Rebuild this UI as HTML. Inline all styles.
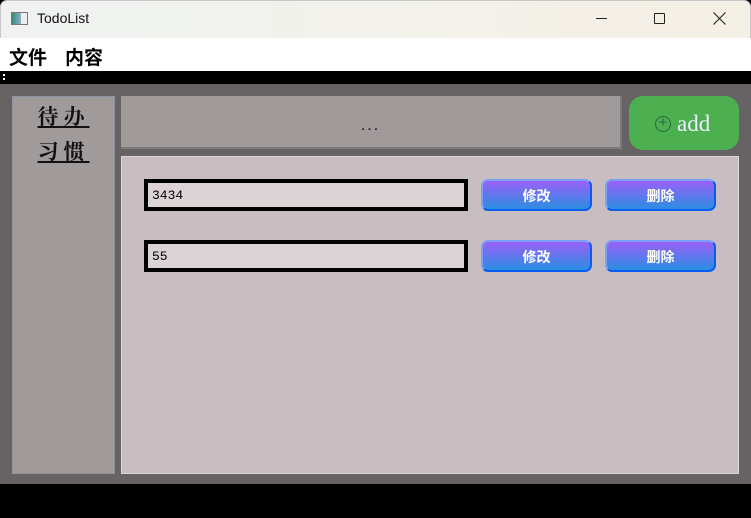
<!DOCTYPE html>
<html><head><meta charset="utf-8"><style>
*{margin:0;padding:0;box-sizing:border-box}
body{width:751px;height:518px;overflow:hidden;background:#000;position:relative;font-family:"Liberation Sans","Noto Sans CJK SC",sans-serif}
.a{position:absolute}
.btn{position:absolute;width:111px;height:32px;border-radius:7px;background:linear-gradient(#9a60f8,#2a8ee2);border:2px solid #7aa0f8;border-bottom-color:#0a5cf0;border-right-color:#0a5cf0;color:#fff;font-weight:bold;font-size:14px;text-align:center;line-height:31px}
.inp{position:absolute;left:144px;width:324px;height:32px;border:4px solid #000;background:#dcd3d6;font-family:"Liberation Mono",monospace;font-size:13px;line-height:26px;padding-left:4px}
</style></head><body>
<div class="a" style="left:0;top:0;width:751px;height:38px;background:linear-gradient(90deg,#eff2f1,#f5f0e5);border:1px solid #c8c8c8;border-bottom:none;border-radius:7px 7px 0 0"></div>
<div class="a" style="left:11px;top:12px;width:17px;height:13px;border:1px solid #777;background:linear-gradient(90deg,#3a8a7a,#8ab0c8 60%,#eee 60%)"></div>
<div class="a" style="left:37px;top:10px;font-size:14px;color:#111">TodoList</div>
<div class="a" style="left:596px;top:18px;width:11px;height:1px;background:#222"></div>
<div class="a" style="left:654px;top:13px;width:11px;height:11px;border:1px solid #222;border-radius:1px"></div>
<svg class="a" style="left:713px;top:12px" width="13" height="13"><path d="M0.5 0.5L12.5 12.5M12.5 0.5L0.5 12.5" stroke="#222" stroke-width="1.1"/></svg>
<div class="a" style="left:0;top:38px;width:751px;height:33px;background:#fff"></div>
<div class="a" style="left:9px;top:43px;font-size:19px;font-weight:bold;color:#000">文件</div>
<div class="a" style="left:65px;top:43px;font-size:19px;font-weight:bold;color:#000">内容</div>
<div class="a" style="left:0;top:84px;width:751px;height:400px;background:#676263"></div>
<div class="a" style="left:3px;top:74px;width:2px;height:2px;background:#fff;box-shadow:0 4px #fff"></div>
<div class="a" style="left:12px;top:96px;width:103px;height:378px;background:#a09a9b;border:1px solid #8e929e"></div>
<div class="a" style="left:31px;top:99px;font-family:'Noto Serif CJK SC',serif;font-weight:bold;font-size:21px;line-height:35px;letter-spacing:5px;color:#111;text-decoration:underline;text-align:center;width:60px;padding-left:5px">待办<br>习惯</div>
<div class="a" style="left:121px;top:96px;width:501px;height:53px;background:#a09a9b;border-right:2px solid #7e7a7b;border-bottom:2px solid #7e7a7b;text-align:center;line-height:60px;font-size:16px;letter-spacing:2px;color:#111">...</div>
<div class="a" style="left:629px;top:96px;width:110px;height:54px;background:#4caf50;border-radius:14px;color:#eef;font-family:'Liberation Serif',serif;font-size:23px;line-height:56px;padding-left:26px"><span style="display:inline-block;width:16px;height:16px;border:1.5px solid #2a6a3a;border-radius:50%;font-size:15px;line-height:12px;text-align:center;color:#2a6a3a;vertical-align:4px;margin-right:6px;font-family:'Liberation Sans'">+</span>add</div>
<div class="a" style="left:121px;top:156px;width:618px;height:318px;background:#c8bec1;border:1px solid #ddd6d8"></div>
<div class="inp" style="top:179px">3434</div>
<div class="btn" style="left:481px;top:179px">修改</div>
<div class="btn" style="left:605px;top:179px">删除</div>
<div class="inp" style="top:240px">55</div>
<div class="btn" style="left:481px;top:240px">修改</div>
<div class="btn" style="left:605px;top:240px">删除</div>
</body></html>
